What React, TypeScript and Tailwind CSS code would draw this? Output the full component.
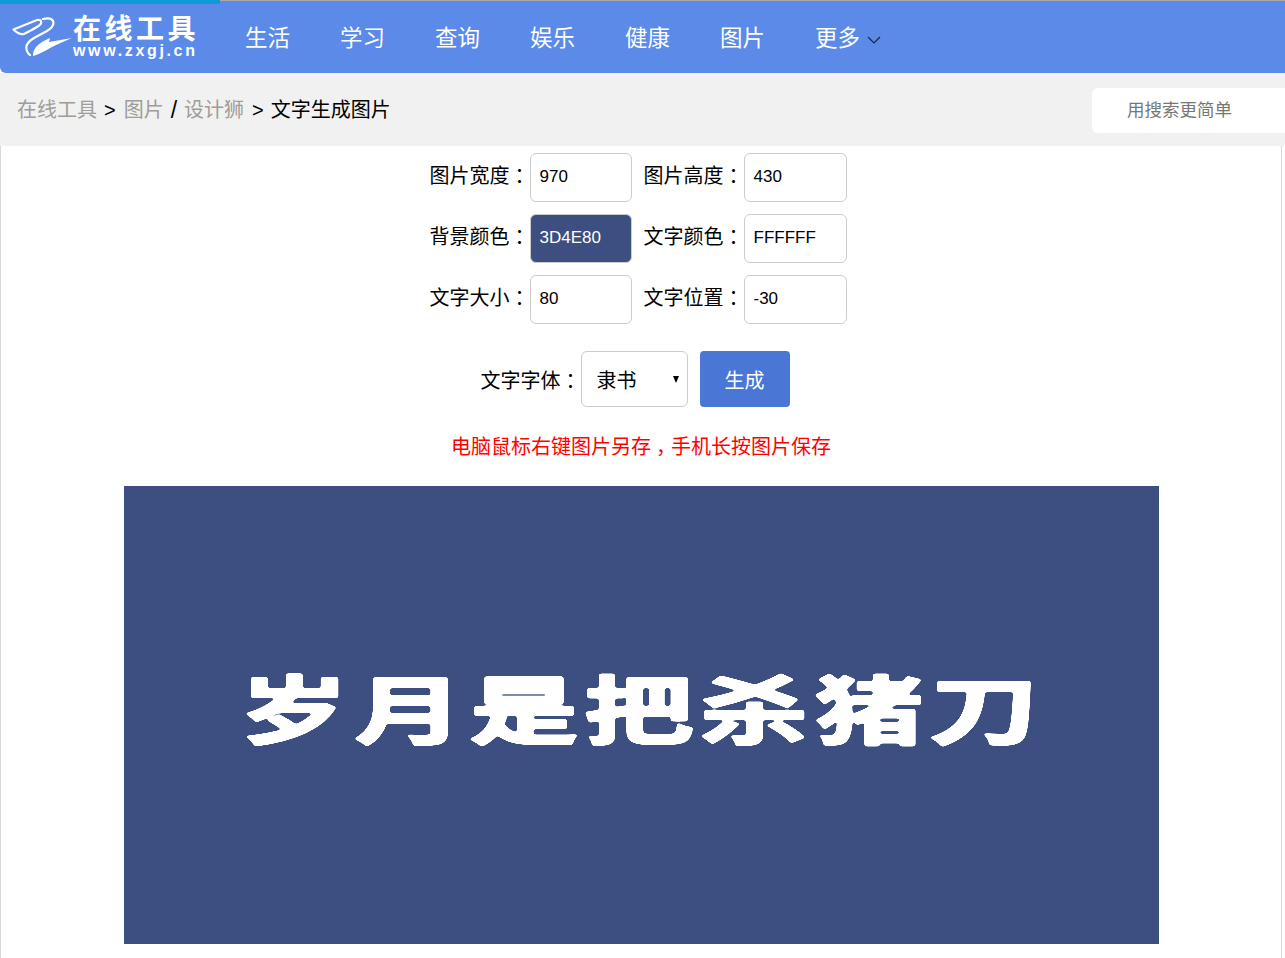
const navItems = ["生活", "学习", "查询", "娱乐", "健康", "图片"];

const cjk = "font-['Liberation_Sans','Noto_Sans_CJK_SC',sans-serif]";

const fields = [
  { label: "图片宽度", value: "970" },
  { label: "图片高度", value: "430" },
  { label: "背景颜色", value: "3D4E80", filled: true },
  { label: "文字颜色", value: "FFFFFF" },
  { label: "文字大小", value: "80" },
  { label: "文字位置", value: "-30" },
];

// the TC face sets the full-width colon in the middle of its cell, as the picture does
function Colon() {
  return <span className="font-['Noto_Sans_CJK_TC',sans-serif] relative top-px">：</span>;
}

function Logo() {
  return (
    <div className="flex items-center gap-px text-white">
      <svg width="60" height="42" viewBox="12 15 60 42" fill="none">
        <path d="M13.5 28.5 L37 19 Q42 18 41 22.5 Q40 25 24 33 Q19 34 13.5 28.5 Z" stroke="white" strokeWidth="2.2" strokeLinejoin="round" />
        <path d="M43 18 Q51 16 53 20 Q55 25 47 30 L34 37 Q24 43 27 50 Q28 53 30 54" stroke="white" strokeWidth="2.2" strokeLinecap="round" />
        <path d="M33 55 Q33 49 37 45 Q42 40 50 37 L49 41 L72 37 Q60 42 52 46 Q40 53 33 55 Z" fill="white" />
      </svg>
      <div className="flex flex-col items-start mt-[2px]">
        <span className="text-[28px] leading-[26px] font-bold tracking-[3.5px]">在线工具</span>
        <span className="text-[16px] leading-[16px] font-bold tracking-[2.65px]">www.zxgj.cn</span>
      </div>
    </div>
  );
}

export default function App() {
  return (
    <div className={`${cjk} bg-white text-black min-h-screen overflow-hidden`}>
      {/* soft corners for the generated picture's text */}
      <svg className="absolute w-0 h-0">
        <filter id="soften">
          <feGaussianBlur stdDeviation="1.5" />
          <feComponentTransfer>
            <feFuncA type="linear" slope="9" intercept="-3.4" />
          </feComponentTransfer>
          <feGaussianBlur stdDeviation="0.5" />
        </filter>
      </svg>

      {/* Header */}
      <header className="relative h-[73px] bg-[#5b8ae9] rounded-bl-md border-t border-[#a9a9a9] flex items-center">
        <div className="absolute left-0 -top-px w-[220px] h-1 bg-[#0f9bd7]" />
        <div className="ml-[12px] w-[208px]">
          <Logo />
        </div>
        <nav className="flex items-center text-[22.5px] text-white pt-[4px]">
          {navItems.map((item) => (
            <a key={item} className="px-[25px]" href="#">
              {item}
            </a>
          ))}
          <a className="pl-[25px] flex items-center gap-[7px]" href="#">
            更多
            <svg width="14" height="8" viewBox="0 0 14 8" fill="none" className="mt-px">
              <path d="M1 1 L7 7 L13 1" stroke="#1b2440" strokeWidth="1.2" />
            </svg>
          </a>
        </nav>
      </header>

      {/* Breadcrumb */}
      <div className="h-[73px] bg-[#f1f1f1] flex items-center justify-between pl-[17px]">
        <div className="flex items-center text-xl mt-[1px]">
          <span className="text-[#a09c97]">在线工具</span>
          <span className="ml-[7px] mr-[8px]">&gt;</span>
          <span className="text-[#a09c97]">图片</span>
          <span className="ml-[7px] mr-[7px] text-[23px] leading-none">/</span>
          <span className="text-[#a09c97]">设计狮</span>
          <span className="ml-[8px] mr-[7px]">&gt;</span>
          <span>文字生成图片</span>
        </div>
        <div className="w-[193px] h-[45px] mt-[2px] bg-white rounded-l-md flex items-center pl-[35px] text-[17.5px] text-[#777]">
          用搜索更简单
        </div>
      </div>

      {/* Form and picture */}
      <main className="border-l border-r border-[#d8d8d8] mr-[3px] flex flex-col items-center pt-[7px] pb-[14px]">
        <div className="grid grid-cols-[auto_102px_auto_103px] gap-y-3 items-center pr-[6px]">
          {fields.map((f, i) => (
            <div key={f.label} className="contents">
              <span className={`text-xl pb-1 ${i % 2 ? "ml-3" : ""}`}>
                {f.label}
                <Colon />
              </span>
              <div
                className={`h-[49px] flex items-center pl-[9px] pb-[2px] text-[17px] rounded-md border border-[#ccc] ${
                  f.filled ? "bg-[#3d4e80] text-white" : "bg-white"
                }`}
              >
                {f.value}
              </div>
            </div>
          ))}
        </div>

        <div className="flex items-center mt-[27px] pr-[12px]">
          <span className="text-xl pt-0.5">
            文字字体
            <Colon />
          </span>
          <div className="w-[107px] h-14 border border-[#ccc] rounded-md flex items-center justify-between pl-[15px] pr-2 text-xl">
            <span className="pt-1">隶书</span>
            <span className="w-0 h-0 border-x-[3.5px] border-x-transparent border-t-[7px] border-t-black" />
          </div>
          <button className="ml-3 w-[90px] h-14 pt-1 rounded bg-[#4a76d6] text-white text-xl">生成</button>
        </div>

        <p className="mt-[26px] text-xl leading-[28px] text-[#ff0000]">
          电脑鼠标右键图片另存<span className="pl-[5px] tracking-[-5px]">，</span>手机长按图片保存
        </p>

        <div className="mt-[25px] w-[1035px] h-[458px] bg-[#3d4e80] flex items-center justify-center">
          <span className="font-['Noto_Sans_CJK_SC',sans-serif] font-bold text-white text-[109px] leading-none tracking-[6px] whitespace-nowrap scale-y-[0.68] [-webkit-text-stroke:3px_white] [filter:url(#soften)] mt-[-20px] ml-[2px]">
            岁月是把杀猪刀
          </span>
        </div>
      </main>
    </div>
  );
}
